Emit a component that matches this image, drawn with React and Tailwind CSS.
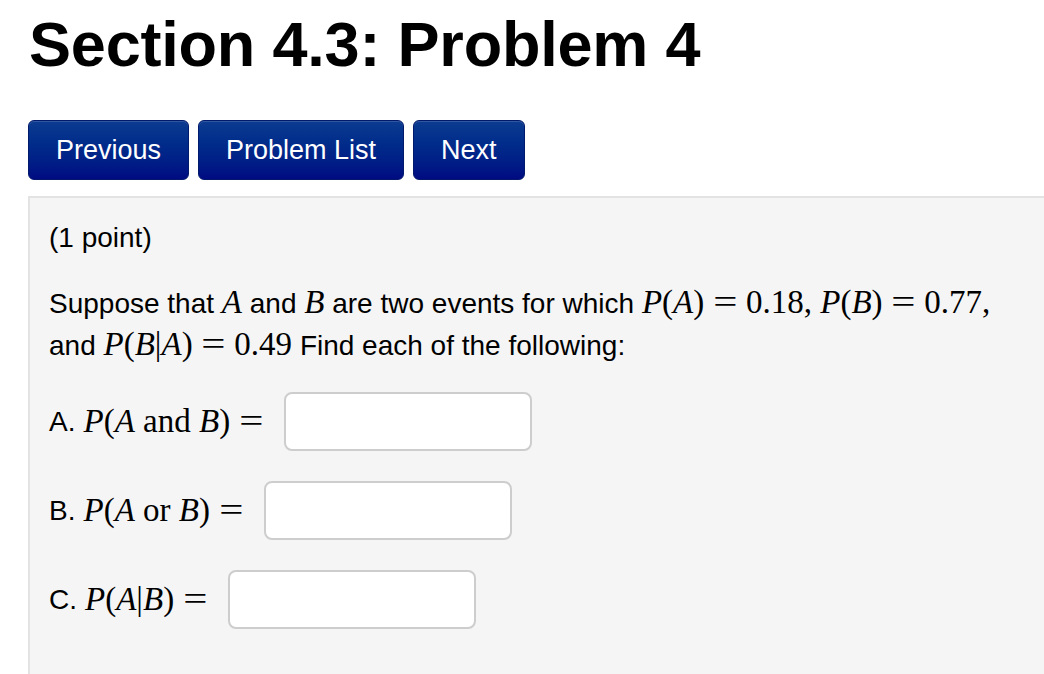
import React from "react";

const sans = { fontFamily: '"Liberation Sans", Arial, Helvetica, sans-serif' };

function M({ children }) {
  return (
    <span className="font-['Liberation_Serif','Times_New_Roman',serif] text-[33px] whitespace-nowrap">
      {children}
    </span>
  );
}

function I({ children }) {
  return <i className="italic">{children}</i>;
}

function Eq() {
  return <span className="inline-block mx-[0.35em] scale-x-[1.3]">=</span>;
}

function Btn({ children }) {
  return (
    <button className="h-[60px] px-[27px] rounded-[6px] border border-[#021a6b] bg-gradient-to-b from-[#0c3b90] to-[#000a82] text-white text-[27px] shadow-[inset_0_1px_0_rgba(255,255,255,0.15)] font-['Liberation_Sans',Arial,sans-serif]">
      {children}
    </button>
  );
}

function Row({ label, children }) {
  return (
    <div className="flex items-center h-[59px]">
      <span className="text-[28px] mr-[8px]">{label}</span>
      <M>{children}</M>
      <div className="ml-[12px] w-[248px] h-[59px] bg-white border-2 border-[#cdcdcd] rounded-[8px]" />
    </div>
  );
}

export default function App() {
  return (
    <div
      className="w-[1044px] h-[674px] overflow-hidden bg-white text-black"
      style={sans}
    >
      <h1 className="ml-[29px] pt-[12px] text-[63px] leading-[64px] font-bold tracking-[-0.2px]">
        Section 4.3: Problem 4
      </h1>
      <div className="flex gap-[9px] ml-[28px] mt-[44px]">
        <Btn>Previous</Btn>
        <Btn>Problem List</Btn>
        <Btn>Next</Btn>
      </div>
      <div className="ml-[28px] mt-[16px] w-[1100px] h-[600px] bg-[#f5f5f5] border-t-2 border-l-2 border-[#e3e3e3] pl-[19px] pt-[18px] text-[28px] leading-[43px]">
        <p>(1 point)</p>
        <p className="mt-[23px] leading-[41px]">
          Suppose that <M><I>A</I></M> and <M><I>B</I></M> are two events for which{" "}
          <M>
            <I>P</I>(<I>A</I>)<Eq />0.18, <I>P</I>(<I>B</I>)<Eq />0.77,
          </M>
          <br />
          and{" "}
          <M>
            <I>P</I>(<I>B</I>|<I>A</I>)<Eq />0.49
          </M>{" "}
          Find each of the following:
        </p>
        <div className="mt-[26px] flex flex-col gap-[30px]">
          <Row label="A.">
            <I>P</I>(<I>A</I> and <I>B</I>)<Eq />
          </Row>
          <Row label="B.">
            <I>P</I>(<I>A</I> or <I>B</I>)<Eq />
          </Row>
          <Row label="C.">
            <I>P</I>(<I>A</I>|<I>B</I>)<Eq />
          </Row>
        </div>
      </div>
    </div>
  );
}
